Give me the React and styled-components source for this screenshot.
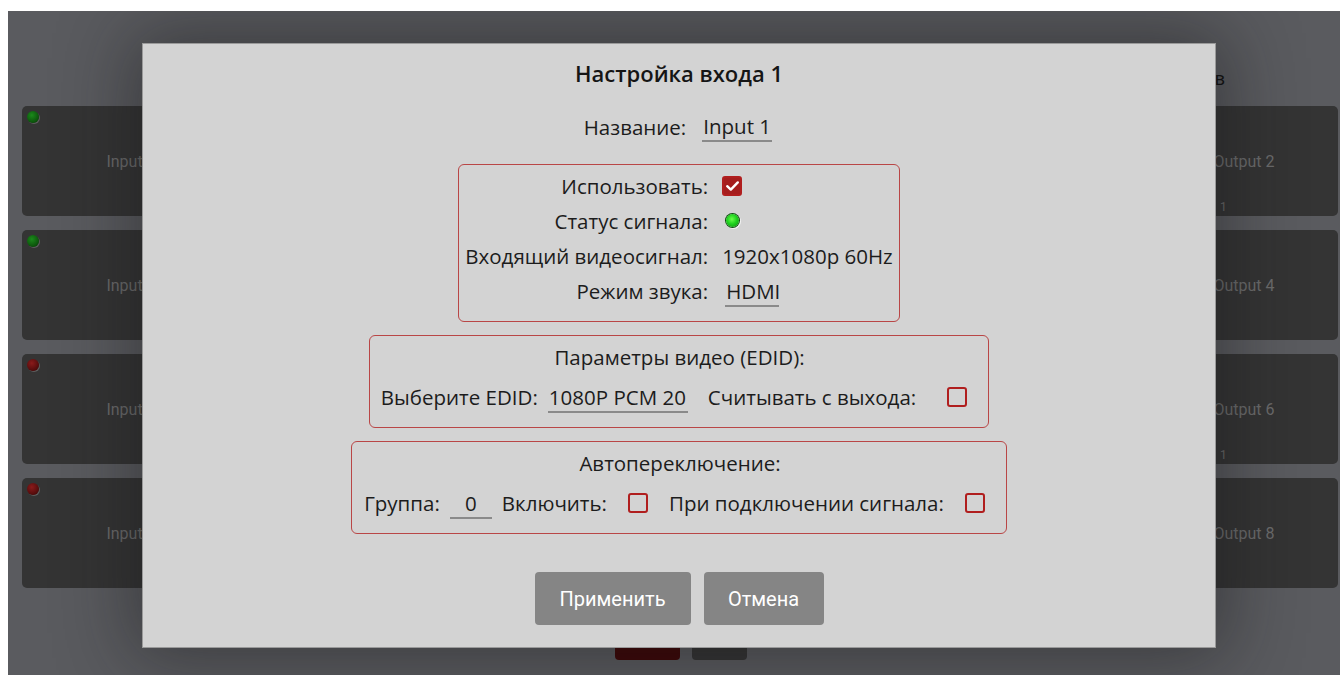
import * as React from 'react';
import styled, { createGlobalStyle } from 'styled-components';

const GlobalStyle = createGlobalStyle`
  html, body {
    margin: 0;
    padding: 0;
    background: #ffffff;
    overflow: hidden;
  }
  body {
    font-family: "Open Sans", "Noto Sans", sans-serif;
  }
`;

// ---- matrix page behind the dialog ----

const Page = styled.div`
  position: relative;
  margin: 11px 0 0 8px;
  height: 664px;
  background: #5a5b5f;
  overflow: hidden;
`;

const Columns = styled.div`
  display: grid;
  grid-template-columns: 218px 1fr 188px;
  padding: 57px 2px 0 14px;
`;

const Column = styled.div`
  display: flex;
  flex-direction: column;
  gap: 14px;
`;

const ColumnTitle = styled.div`
  height: 25px;
  margin: 0 0 -1px ${p => p.$indent || 0}px;
  font-family: "Roboto", sans-serif;
  font-size: 18px;
  color: #111;
  white-space: nowrap;
`;

const Card = styled.div`
  position: relative;
  height: 110px;
  border-radius: 5px;
  background: #343434;
  display: flex;
  flex-direction: column;
  justify-content: center;
  align-items: center;
  font-family: "Roboto", sans-serif;
  font-size: 16px;
  color: #6b6b6b;
`;

const CardFoot = styled.div`
  position: absolute;
  left: 70px;
  bottom: 2px;
  font-size: 12px;
  color: #6b6b6b;
`;

const Led = styled.span`
  position: absolute;
  top: 5px;
  left: 5px;
  width: 12px;
  height: 12px;
  border-radius: 50%;
  background: radial-gradient(circle at 40% 35%, ${p => (p.$on ? '#1b8a1b' : '#8a1b1b')} 0%, ${p => (p.$on ? '#0a4d0a' : '#4d0a0a')} 75%);
  box-shadow: 1px 1px 0 rgba(120, 120, 120, 0.6);
`;

const Middle = styled.div`
  display: flex;
  flex-direction: column;
  justify-content: flex-end;
  align-items: center;
`;

const BottomBar = styled.div`
  display: flex;
  gap: 12px;
  margin: 0 0 0 -28px;
  transform: translateY(72px);
`;

const BarButton = styled.div`
  width: ${p => p.$w}px;
  height: 36px;
  border-radius: 4px;
  background: ${p => p.$bg};
`;

// ---- dialog ----

const Modal = styled.div`
  position: absolute;
  left: 134px;
  top: 32px;
  width: 1072px;
  height: 603px;
  box-sizing: content-box;
  border: 1px solid #9a9a9a;
  background: #d3d3d3;
  box-shadow: 0 0 70px 10px rgba(20, 20, 22, 0.45);
  display: flex;
  flex-direction: column;
  align-items: center;
  color: #1c1c1c;
  font-size: 20.5px;
`;

const Title = styled.h2`
  margin: 15px 0 0;
  font-size: 22px;
  line-height: 28px;
  font-weight: 600;
  color: #151515;
`;

const NameRow = styled.div`
  display: flex;
  align-items: center;
  gap: 16px;
  margin: 25px 0 0 -2px;
  height: 30px;
`;

const Field = styled.span`
  display: inline-block;
  width: ${p => p.$w}px;
  border-bottom: 2px solid #8a8a8a;
  text-align: ${p => p.$align || 'left'};
  line-height: 28px;
  padding: 0 1px;
  box-sizing: border-box;
  transform: translateY(${p => p.$drop || 0}px);
`;

const Group = styled.div`
  margin-top: ${p => p.$top}px;
  padding: ${p => p.$pad};
  border: 1px solid #b94646;
  border-radius: 6px;
  display: flex;
  flex-direction: column;
  align-items: center;
`;

const InfoGrid = styled.div`
  display: grid;
  grid-template-columns: auto auto;
  column-gap: 14px;
  grid-auto-rows: 35px;
  align-items: center;
`;

const Label = styled.span`
  text-align: right;
  white-space: nowrap;
`;

const Value = styled.span`
  display: flex;
  align-items: center;
  white-space: nowrap;
`;

const GroupTitle = styled.div`
  height: 36px;
  line-height: 36px;
`;

const Line = styled.div`
  display: flex;
  align-items: center;
  gap: 10px;
  height: 36px;
  margin-top: 4px;
  white-space: nowrap;
`;

const Box = styled.span`
  display: inline-flex;
  align-items: center;
  justify-content: center;
  flex: none;
  width: 20px;
  height: 20px;
  margin: 0 ${p => p.$mr || 0}px 0 ${p => p.$ml || 0}px;
  box-sizing: border-box;
  border-radius: 3px;
  border: 2px solid #b01e1e;
  background: ${p => (p.$checked ? '#a51d1d' : 'transparent')};
`;

const SignalDot = styled.span`
  display: inline-block;
  width: 13px;
  height: 13px;
  margin-left: 4px;
  border-radius: 50%;
  background: radial-gradient(circle at 45% 40%, #6cff4a 0%, #1fd21f 45%, #0b8a0b 100%);
  box-shadow: 0 0 0 1px #0d4d0d, 1px 1px 0 1px rgba(255, 255, 255, 0.7);
`;

const Actions = styled.div`
  display: flex;
  gap: 13px;
  margin-top: 38px;
`;

const Button = styled.button`
  width: ${p => p.$w}px;
  height: 53px;
  border: none;
  border-radius: 4px;
  background: #858585;
  color: #fff;
  font-family: "Roboto", sans-serif;
  font-size: 20px;
`;

const Checkbox = ({ checked, ml, mr }) => (
  <Box $checked={checked} $ml={ml} $mr={mr}>
    {checked && (
      <svg width="15" height="12" viewBox="0 0 15 12">
        <path d="M2.2 6.2 L5.8 9.6 L12.8 2.4" fill="none" stroke="#fff" strokeWidth="2.4" strokeLinecap="round" strokeLinejoin="round" />
      </svg>
    )}
  </Box>
);

const inputs = [true, true, false, false];
const outputs = [
  { name: 'Output 2', foot: '1' },
  { name: 'Output 4' },
  { name: 'Output 6', foot: '1' },
  { name: 'Output 8' },
];

export default function App() {
  return (
    <>
      <GlobalStyle />
      <Page>
        <Columns>
          <Column>
            <ColumnTitle $indent={140}>Входы</ColumnTitle>
            {inputs.map((on, i) => (
              <Card key={i}>
                <Led $on={on} />
                Input {i + 1}
              </Card>
            ))}
          </Column>
          <Middle>
            <BottomBar>
              <BarButton $w={65} $bg="#3d0606" />
              <BarButton $w={55} $bg="#343434" />
            </BottomBar>
          </Middle>
          <Column>
            <ColumnTitle $indent={0}>Выходов</ColumnTitle>
            {outputs.map(o => (
              <Card key={o.name}>
                {o.name}
                {o.foot && <CardFoot>{o.foot}</CardFoot>}
              </Card>
            ))}
          </Column>
        </Columns>

        <Modal>
          <Title>Настройка входа 1</Title>

          <NameRow>
            <span>Название:</span>
            <Field $w={70}>Input 1</Field>
          </NameRow>

          <Group $top={22} $pad="3px 6px 13px">
            <InfoGrid>
              <Label>Использовать:</Label>
              <Value><Checkbox checked /></Value>
              <Label>Статус сигнала:</Label>
              <Value><SignalDot /></Value>
              <Label>Входящий видеосигнал:</Label>
              <Value>1920x1080p 60Hz</Value>
              <Label>Режим звука:</Label>
              <Value><Field $w={54} $drop={1} style={{ marginLeft: 3 }}>HDMI</Field></Value>
            </InfoGrid>
          </Group>

          <Group $top={13} $pad="3px 10px 12px 11px">
            <GroupTitle>Параметры видео (EDID):</GroupTitle>
            <Line>
              <span>Выберите EDID:</span>
              <Field $w={140} $drop={1}>1080P PCM 20</Field>
              <span style={{ marginLeft: 10 }}>Считывать с выхода:</span>
              <Checkbox ml={21} mr={11} />
            </Line>
          </Group>

          <Group $top={13} $pad="3px 10px 12px 12px">
            <GroupTitle>Автопереключение:</GroupTitle>
            <Line>
              <span>Группа:</span>
              <Field $w={42} $align="center" $drop={1}>0</Field>
              <span>Включить:</span>
              <Checkbox ml={11} mr={11} />
              <span>При подключении сигнала:</span>
              <Checkbox ml={11} mr={11} />
            </Line>
          </Group>

          <Actions>
            <Button $w={156}>Применить</Button>
            <Button $w={120}>Отмена</Button>
          </Actions>
        </Modal>
      </Page>
    </>
  );
}
